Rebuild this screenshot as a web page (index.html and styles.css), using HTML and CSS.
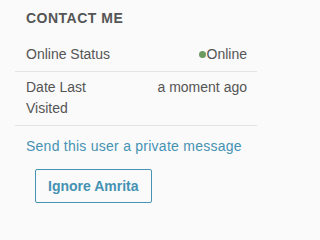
FILE: index.html
```html
<!DOCTYPE html>
<html>
<head>
<meta charset="utf-8">
<link rel="stylesheet" href="styles.css">
</head>
<body>
<div class="panel">
  <h3 class="title">CONTACT ME</h3>
  <div class="row">
    <div class="label">Online Status</div>
    <div class="value"><span class="dot"></span>Online</div>
  </div>
  <div class="row">
    <div class="label">Date Last Visited</div>
    <div class="value">a moment ago</div>
  </div>
  <div class="actions">
    <a class="link" href="#">Send this user a private message</a>
    <button class="btn" type="button">Ignore Amrita</button>
  </div>
</div>
</body>
</html>
```
FILE: styles.css
```css
html, body {
  margin: 0;
  padding: 0;
  background: #fafafa;
}
body {
  font-family: "Liberation Sans", Arial, sans-serif;
  color: #555555;
  padding-top: 8px;
}
.panel {
  margin-left: 15px;
  width: 242px;
}
.title {
  margin: 0 0 11px 0;
  padding: 0 10px 0 11px;
  font-size: 14px;
  line-height: 20px;
  font-weight: bold;
  letter-spacing: 0.5px;
  color: #555555;
}
.row {
  display: grid;
  grid-template-columns: 90px 1fr;
  padding: 5px 10px 6px 11px;
  border-bottom: 1px solid #e3e3e3;
  font-size: 14px;
  line-height: 21px;
}
.value {
  text-align: right;
}
.dot {
  display: inline-block;
  width: 7px;
  height: 7px;
  border-radius: 50%;
  background: #6d9a5e;
  margin-right: 1px;
  vertical-align: 1px;
}
.actions {
  padding: 10px 10px 0 11px;
  display: flex;
  flex-direction: column;
  align-items: flex-start;
  gap: 12px;
}
.link {
  font-size: 14px;
  line-height: 21px;
  letter-spacing: 0.25px;
  color: #4592b3;
  text-decoration: none;
}
.btn {
  margin-left: 9px;
  height: 34px;
  padding: 0 12px;
  border: 1px solid #4592b3;
  border-radius: 2px;
  background: transparent;
  color: #4592b3;
  font-family: "Liberation Sans", Arial, sans-serif;
  font-size: 14px;
  font-weight: bold;
}
```
